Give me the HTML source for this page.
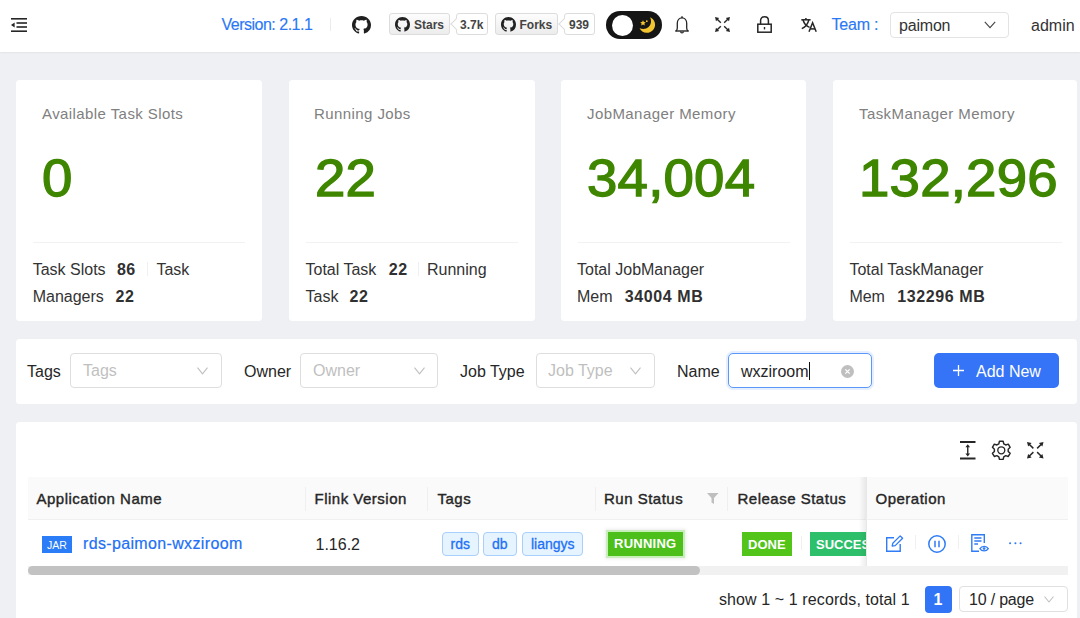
<!DOCTYPE html>
<html><head><meta charset="utf-8">
<style>
*{box-sizing:border-box;margin:0;padding:0}
html,body{width:1080px;height:618px;overflow:hidden;background:#eff0f4;font-family:"Liberation Sans",sans-serif;color:#262626}
.a{position:absolute}
.t{position:absolute;white-space:nowrap;line-height:1}
svg{position:absolute;overflow:visible}
#hdr{position:absolute;left:0;top:0;width:1080px;height:52px;background:#fff;box-shadow:0 1px 1.5px rgba(0,0,0,0.05)}
.card{position:absolute;background:#fff;border-radius:3.5px}
.gh{position:absolute;top:13px;height:22px;border:1px solid #dcdcdc;border-radius:3px;background:linear-gradient(#fdfdfd,#ececec)}
.cnt{position:absolute;top:13px;height:22px;border:1px solid #dcdcdc;border-radius:3px;background:#fff}
.ght{position:absolute;top:5px;font-weight:700;font-size:12px;line-height:1;color:#444;white-space:nowrap}
.arr{position:absolute;left:-5px;top:6px;width:8px;height:8px;background:#fff;border-left:1px solid #dcdcdc;border-bottom:1px solid #dcdcdc;transform:rotate(45deg)}
.sel{position:absolute;border:1px solid #dedede;border-radius:4px;background:#fff}
.tt{top:106px;font-size:15px;color:#808080;letter-spacing:0.42px}
.vv{top:152px;font-size:52px;color:#3f8600;letter-spacing:0.2px;transform:scaleX(1.05);transform-origin:0 0;-webkit-text-stroke:1.3px #3f8600}
.ff{font-size:16px;color:#333}
.b{font-weight:700;color:#303030;letter-spacing:0.6px;margin-left:0.7px}
.lbl{font-size:16px;color:#262626;top:364px}
.ph{font-size:16px;color:#bfbfbf;top:363px}
.th{font-size:15px;font-weight:400;color:#262626;top:491px;-webkit-text-stroke:0.4px #262626;letter-spacing:0.5px}
.blue{color:#2170f5;-webkit-text-stroke:0.2px #2170f5}
.tag{position:absolute;top:531.5px;height:24px;border:1px solid #a9cffb;border-radius:4px;background:#e6f4ff}
.tagt{position:absolute;top:4px;font-size:14px;line-height:1;color:#2170f5;-webkit-text-stroke:0.3px #2170f5;white-space:nowrap}
.st{position:absolute;height:24px;color:#fff;font-weight:700;font-size:13px;line-height:1}
.st span{position:absolute;top:5.5px;white-space:nowrap}
.hsep{position:absolute;top:487px;width:1px;height:24px;background:#efefef}
.osep{position:absolute;top:535px;width:1px;height:14px;background:#f0f0f0}
</style></head><body>
<svg width="0" height="0" style="position:absolute"><defs>
<path id="ghm" d="M8 0C3.58 0 0 3.58 0 8c0 3.54 2.29 6.53 5.47 7.590.4.07.55-.17.55-.38 0-.19-.01-.82-.01-1.49-2.01.37-2.53-.49-2.69-.94-.09-.23-.48-.94-.82-1.13-.28-.15-.68-.52-.01-.53.63-.01 1.08.58 1.23.82.72 1.21 1.87.87 2.330.66.07-.52.28-.87.51-1.07-1.78-.2-3.64-.89-3.64-3.95 0-.87.31-1.59.82-2.15-.08-.2-.36-1.02.08-2.12 0 0 .67-.21 2.2.82.64-.18 1.32-.27 2-.27.68 0 1.36.09 2 .27 1.53-1.04 2.2-.82 2.2-.82.44 1.1.16 1.92.08 2.12.51.56.82 1.27.82 2.15 0 3.07-1.87 3.75-3.65 3.95.29.25.54.73.54 1.48 0 1.07-.01 1.93-.01 2.2 0 .21.15.46.55.38A8.013 8.013 0 0016 8c0-4.42-3.58-8-8-8z"/>
</defs></svg>
<div id="hdr">
  <!-- menu fold icon -->
  <svg style="left:11px;top:18px" width="16" height="14" viewBox="0 0 16 14">
    <rect x="0" y="0" width="16" height="1.6" fill="#262626"/>
    <rect x="5.5" y="4.2" width="10.5" height="1.6" fill="#262626"/>
    <rect x="5.5" y="8.2" width="10.5" height="1.6" fill="#262626"/>
    <rect x="0" y="12.4" width="16" height="1.6" fill="#262626"/>
    <path d="M0 7 L3.6 4.4 L3.6 9.6Z" fill="#262626"/>
  </svg>
  <div class="t" style="left:221.5px;top:16.7px;font-size:16px;color:#2a78f6;-webkit-text-stroke:0.15px #2a78f6;letter-spacing:-0.5px">Version: 2.1.1</div>
  <div class="a" style="left:330px;top:18px;width:1px;height:13px;background:#ececec"></div>
  <svg style="left:352px;top:16px" width="19" height="18" viewBox="0 0 16 16" preserveAspectRatio="none"><use href="#ghm" fill="#1f1f1f"/></svg>

  <div class="gh" style="left:389px;width:61px">
    <svg style="left:5px;top:3px" width="15" height="15" viewBox="0 0 16 16"><use href="#ghm" fill="#222"/></svg>
    <div class="ght" style="left:24px">Stars</div>
  </div>
  <div class="cnt" style="left:456px;width:32px"><div class="arr"></div><div class="ght" style="left:3px">3.7k</div></div>
  <div class="gh" style="left:495px;width:63px">
    <svg style="left:5px;top:3px" width="15" height="15" viewBox="0 0 16 16"><use href="#ghm" fill="#222"/></svg>
    <div class="ght" style="left:23.5px">Forks</div>
  </div>
  <div class="cnt" style="left:564px;width:31px"><div class="arr"></div><div class="ght" style="left:4px">939</div></div>

  <!-- dark toggle -->
  <div class="a" style="left:606px;top:11px;width:56px;height:28px;border-radius:14px;background:#151515"></div>
  <div class="a" style="left:612px;top:14.5px;width:21px;height:21px;border-radius:50%;background:#fff"></div>
  <svg style="left:639px;top:17px" width="17" height="16" viewBox="0 0 17 16">
    <path d="M11 0.3 C14.8 1.8 16.4 5.2 16 8.8 C15.4 13 11.8 16 7.6 15.8 C4.4 15.6 1.8 13.8 0.6 11.2 C3.6 12.4 7.2 12.2 9.6 10 C12.2 7.6 12.8 3.6 11 0.3Z" fill="#f4c430"/>
    <path d="M4 3.2 L4.9 5 L6.8 5.2 L5.4 6.5 L5.8 8.4 L4 7.4 L2.2 8.4 L2.6 6.5 L1.2 5.2 L3.1 5Z" fill="#f4c430"/>
    <circle cx="7.8" cy="4.2" r="0.9" fill="#f4c430"/>
  </svg>
  <!-- bell -->
  <svg style="left:675px;top:16px" width="14" height="18" viewBox="0 0 14 18">
    <path d="M1 15 C1.9 14.3 2.3 13.3 2.3 12 V7.3 C2.3 4.3 4.3 1.9 7 1.9 C9.7 1.9 11.7 4.3 11.7 7.3 V12 C11.7 13.3 12.1 14.3 13 15" fill="none" stroke="#262626" stroke-width="1.3"/>
    <path d="M0.2 15 H13.8" stroke="#262626" stroke-width="1.4"/>
    <path d="M7 0.2 V2" stroke="#262626" stroke-width="1.4"/>
    <path d="M5.6 15.6 A1.4 1.4 0 0 0 8.4 15.6" fill="none" stroke="#262626" stroke-width="1.2"/>
  </svg>
  <!-- fullscreen -->
  <svg style="left:715px;top:17px" width="15" height="15" viewBox="0 0 15 15">
    <g stroke="#262626" stroke-width="1.4" fill="none"><path d="M1.5 1.5 L5.8 5.8"/><path d="M13.5 1.5 L9.2 5.8"/><path d="M1.5 13.5 L5.8 9.2"/><path d="M13.5 13.5 L9.2 9.2"/></g>
    <g fill="#262626"><path d="M0 0 L4.2 1 L1 4.2Z"/><path d="M15 0 L14 4.2 L10.8 1Z"/><path d="M0 15 L1 10.8 L4.2 14Z"/><path d="M15 15 L10.8 14 L14 10.8Z"/></g>
  </svg>
  <!-- lock -->
  <svg style="left:757px;top:16px" width="15" height="17" viewBox="0 0 15 17">
    <path d="M3.6 8.2 V4.5 C3.6 2.2 5.2 0.8 7.5 0.8 C9.8 0.8 11.4 2.2 11.4 4.5 V8.2" fill="none" stroke="#262626" stroke-width="1.5"/>
    <rect x="0.8" y="8.2" width="13.4" height="8" fill="none" stroke="#262626" stroke-width="1.5"/>
    <rect x="6.8" y="11" width="1.4" height="2.4" fill="#262626"/>
  </svg>
  <!-- translate -->
  <svg style="left:801px;top:18px" width="16" height="14" viewBox="0 0 16 14">
    <g stroke="#262626" stroke-width="1.5" fill="none">
      <path d="M0.3 1.8 H9.6"/><path d="M4.9 0 V1.8"/>
      <path d="M2 1.8 C3 5.6 5.4 8.2 8.6 9.4"/><path d="M7.8 1.8 C7 5.6 4.2 9 0.8 10.6"/>
      <path d="M8 13.8 L11.6 4.8 L15.2 13.8"/><path d="M9.2 10.9 H14"/>
    </g>
  </svg>
  <div class="t" style="left:831.5px;top:16.7px;font-size:16px;color:#2a78f6;-webkit-text-stroke:0.15px #2a78f6;letter-spacing:-0.2px">Team :</div>
  <div class="sel" style="left:889.5px;top:11.5px;width:119px;height:26px;border-color:#e3e3e3"></div>
  <div class="t" style="left:899px;top:18px;font-size:16px;color:#333;letter-spacing:-0.2px">paimon</div>
  <svg style="left:984px;top:21px" width="12" height="8" viewBox="0 0 12 8"><path d="M0.8 0.8 L6 6.6 L11.2 0.8" fill="none" stroke="#444" stroke-width="1.1"/></svg>
  <div class="t" style="left:1031px;top:17.7px;font-size:16px;color:#333">admin</div>
</div>
<!--CARDS-->
<div class="card" style="left:16px;top:80px;width:246px;height:241px"></div>
<div class="t tt" style="left:42px">Available Task Slots</div>
<div class="t vv" style="left:42px">0</div>
<div class="a" style="left:33px;top:242px;width:212px;height:1px;background:#f2f2f2"></div>
<div class="card" style="left:289px;top:80px;width:246px;height:241px"></div>
<div class="t tt" style="left:314px">Running Jobs</div>
<div class="t vv" style="left:315px">22</div>
<div class="a" style="left:306px;top:242px;width:212px;height:1px;background:#f2f2f2"></div>
<div class="card" style="left:561px;top:80px;width:245px;height:241px"></div>
<div class="t tt" style="left:587px">JobManager Memory</div>
<div class="t vv" style="left:587px">34,004</div>
<div class="a" style="left:578px;top:242px;width:212px;height:1px;background:#f2f2f2"></div>
<div class="card" style="left:833px;top:80px;width:244px;height:241px"></div>
<div class="t tt" style="left:859px">TaskManager Memory</div>
<div class="t vv" style="left:859px">132,296</div>
<div class="a" style="left:850px;top:242px;width:212px;height:1px;background:#f2f2f2"></div>
<div class="t ff" style="left:32.7px;top:262px">Task Slots</div>
<div class="t ff b" style="left:116.2px;top:262px">86</div>
<div class="t ff" style="left:156.4px;top:262px">Task</div>
<div class="t ff" style="left:32.7px;top:289px">Managers</div>
<div class="t ff b" style="left:114.9px;top:289px">22</div>
<div class="t ff" style="left:305.5px;top:262px">Total Task</div>
<div class="t ff b" style="left:388.0px;top:262px">22</div>
<div class="t ff" style="left:427.0px;top:262px">Running</div>
<div class="t ff" style="left:305.5px;top:289px">Task</div>
<div class="t ff b" style="left:348.8px;top:289px">22</div>
<div class="t ff" style="left:577.0px;top:262px">Total JobManager</div>
<div class="t ff" style="left:577.0px;top:289px">Mem</div>
<div class="t ff b" style="left:624.0px;top:289px">34004 MB</div>
<div class="t ff" style="left:849.4px;top:262px">Total TaskManager</div>
<div class="t ff" style="left:849.4px;top:289px">Mem</div>
<div class="t ff b" style="left:896.6px;top:289px">132296 MB</div>
<div class="a" style="left:147px;top:262px;width:1px;height:14px;background:#f0f0f0"></div>
<div class="a" style="left:417.5px;top:262px;width:1px;height:14px;background:#f0f0f0"></div>
<!--/CARDS-->
<!--FILTER-->
<div class="card" style="left:16px;top:339px;width:1061px;height:65px"></div>
<div class="t lbl" style="left:27px">Tags</div>
<div class="sel" style="left:70px;top:352.5px;width:152px;height:35.5px"></div>
<div class="t ph" style="left:83px">Tags</div>
<svg style="left:197px;top:367px" width="11" height="8" viewBox="0 0 11 8"><path d="M0.5 0.6 L5.5 6.8 L10.5 0.6" fill="none" stroke="#bfbfbf" stroke-width="1.1"/></svg>
<div class="t lbl" style="left:244px">Owner</div>
<div class="sel" style="left:300px;top:352.5px;width:137.5px;height:35.5px"></div>
<div class="t ph" style="left:313px">Owner</div>
<svg style="left:414px;top:367px" width="11" height="8" viewBox="0 0 11 8"><path d="M0.5 0.6 L5.5 6.8 L10.5 0.6" fill="none" stroke="#bfbfbf" stroke-width="1.1"/></svg>
<div class="t lbl" style="left:460px">Job Type</div>
<div class="sel" style="left:535.5px;top:352.5px;width:119.5px;height:35.5px"></div>
<div class="t ph" style="left:548px">Job Type</div>
<svg style="left:630px;top:367px" width="11" height="8" viewBox="0 0 11 8"><path d="M0.5 0.6 L5.5 6.8 L10.5 0.6" fill="none" stroke="#bfbfbf" stroke-width="1.1"/></svg>
<div class="t lbl" style="left:677px">Name</div>
<div class="a" style="left:728px;top:353px;width:144px;height:35px;border:1px solid #5b97f8;border-radius:5px;background:#fff;box-shadow:0 0 0 2px rgba(45,125,246,0.12)"></div>
<div class="t lbl" style="left:741px">wxziroom</div>
<div class="a" style="left:809px;top:362px;width:1.2px;height:18px;background:#111"></div>
<svg style="left:840.5px;top:364.5px" width="13" height="13" viewBox="0 0 13 13"><circle cx="6.5" cy="6.5" r="6.5" fill="#bfbfbf"/><path d="M4.3 4.3 L8.7 8.7 M8.7 4.3 L4.3 8.7" stroke="#fff" stroke-width="1.2"/></svg>
<div class="a" style="left:934px;top:353px;width:125px;height:35px;border-radius:5px;background:#3574f6"></div>
<svg style="left:953px;top:365px" width="11" height="11" viewBox="0 0 11 11"><path d="M5.5 0 V11 M0 5.5 H11" stroke="#fff" stroke-width="1.3"/></svg>
<div class="t" style="left:976px;top:364px;font-size:16px;color:#fff">Add New</div>
<!--/FILTER-->
<!--TABLE-->
<div class="card" style="left:16px;top:422px;width:1061px;height:220px"></div>
<!-- toolbar icons -->
<svg style="left:959.5px;top:440.5px" width="16" height="19" viewBox="0 0 16 19">
  <path d="M0 1 H15.5 M0 17.5 H15.5" stroke="#262626" stroke-width="1.9"/>
  <path d="M7.75 5 V14" stroke="#262626" stroke-width="1.4"/>
  <path d="M7.75 3.2 L5.4 6.2 H10.1Z M7.75 15.4 L5.4 12.4 H10.1Z" fill="#262626"/>
</svg>
<svg style="left:990.8px;top:439.5px" width="20.6" height="20.6" viewBox="0 0 20 20">
  <path d="M8.2 1.2 H11.8 L12.4 3.7 L14.3 4.8 L16.8 4 L18.6 7.1 L16.7 8.9 V11.1 L18.6 12.9 L16.8 16 L14.3 15.2 L12.4 16.3 L11.8 18.8 H8.2 L7.6 16.3 L5.7 15.2 L3.2 16 L1.4 12.9 L3.3 11.1 V8.9 L1.4 7.1 L3.2 4 L5.7 4.8 L7.6 3.7Z" fill="none" stroke="#262626" stroke-width="1.4" stroke-linejoin="round"/>
  <circle cx="10" cy="10" r="3.4" fill="none" stroke="#262626" stroke-width="1.3"/>
</svg>
<svg style="left:1027px;top:441.5px" width="16.5" height="16.5" viewBox="0 0 15 15">
  <g stroke="#262626" stroke-width="1.3" fill="none"><path d="M1.5 1.5 L5.8 5.8"/><path d="M13.5 1.5 L9.2 5.8"/><path d="M1.5 13.5 L5.8 9.2"/><path d="M13.5 13.5 L9.2 9.2"/></g>
  <g fill="#262626"><path d="M0 0 L4.2 1 L1 4.2Z"/><path d="M15 0 L14 4.2 L10.8 1Z"/><path d="M0 15 L1 10.8 L4.2 14Z"/><path d="M15 15 L10.8 14 L14 10.8Z"/></g>
</svg>
<!-- header -->
<div class="a" style="left:28px;top:477px;width:1039.5px;height:42.5px;background:#fafafa;border-bottom:1px solid #f0f0f0"></div>
<div class="hsep" style="left:304.5px"></div>
<div class="hsep" style="left:427px"></div>
<div class="hsep" style="left:594.5px"></div>
<div class="hsep" style="left:727px"></div>
<div class="t th" style="left:36.5px">Application Name</div>
<div class="t th" style="left:314.5px">Flink Version</div>
<div class="t th" style="left:437.5px">Tags</div>
<div class="t th" style="left:604px">Run Status</div>
<svg style="left:707px;top:493px" width="11.5" height="11" viewBox="0 0 11.5 11"><path d="M0 0 H11.5 L7 5 V11 L4.5 9.6 V5Z" fill="#bfbfbf"/></svg>
<div class="t th" style="left:737.5px">Release Status</div>
<!-- row -->
<div class="a" style="left:42px;top:536px;width:30px;height:17px;background:#2a7df6"></div>
<div class="t" style="left:47px;top:539.5px;font-size:10.5px;color:#fff">JAR</div>
<div class="t blue" style="left:83px;top:535.5px;font-size:16px;letter-spacing:0.35px">rds-paimon-wxziroom</div>
<div class="t" style="left:315.5px;top:537px;font-size:16px;color:#262626">1.16.2</div>
<div class="tag" style="left:441.5px;width:37.5px"><div class="tagt" style="left:8px">rds</div></div>
<div class="tag" style="left:483px;width:34px"><div class="tagt" style="left:8px">db</div></div>
<div class="tag" style="left:521.5px;width:61.5px"><div class="tagt" style="left:8.5px">liangys</div></div>
<div class="st" style="left:608px;top:531.5px;width:75px;background:#4cbf1a;box-shadow:0 0 0 2px #c8eebb,0 0 3px 3px rgba(0,0,0,0.08)"><span style="left:6px;letter-spacing:0.25px">RUNNING</span></div>
<div class="st" style="left:741.5px;top:532px;width:50px;height:23.5px;background:#52c41a"><span style="left:6.5px">DONE</span></div>
<div class="osep" style="left:800.5px;top:536px;height:14px"></div>
<div class="st" style="left:810px;top:532px;width:70px;height:23.5px;background:#2ebf6b"><span style="left:6px">SUCCESS</span></div>
<!-- scrollbar -->
<div class="a" style="left:28px;top:566px;width:1039.5px;height:9px;background:#f1f1f1"></div>
<div class="a" style="left:28px;top:566px;width:672px;height:9px;background:#c2c2c2;border-radius:4.5px"></div>
<!-- fixed operation column -->
<div class="a" style="left:859px;top:477px;width:7px;height:89px;background:linear-gradient(to right,rgba(0,0,0,0),rgba(0,0,0,0.07))"></div>
<div class="a" style="left:866px;top:477px;width:201.5px;height:42.5px;background:#fafafa;border-bottom:1px solid #f0f0f0;border-left:1px solid #e8e8e8"></div>
<div class="a" style="left:866px;top:520px;width:201.5px;height:46px;background:#fff;border-left:1px solid #e8e8e8"></div>
<div class="a" style="left:866px;top:566px;width:201.5px;height:9px;background:#f1f1f1"></div>
<div class="t th" style="left:875.5px">Operation</div>
<svg style="left:886px;top:534.5px" width="18" height="17" viewBox="0 0 18 17">
  <path d="M8 2.8 H0.7 V16.3 H14.2 V9" fill="none" stroke="#2f7cf6" stroke-width="1.4"/>
  <path d="M6.2 11 L6.8 8.2 L14.2 0.9 L16.6 3.3 L9.2 10.6Z" fill="none" stroke="#2f7cf6" stroke-width="1.3" stroke-linejoin="round"/>
</svg>
<div class="osep" style="left:915px"></div>
<svg style="left:927.5px;top:534.5px" width="18" height="18" viewBox="0 0 18 18">
  <circle cx="9" cy="9" r="8.2" fill="none" stroke="#2f7cf6" stroke-width="1.5"/>
  <path d="M7 5.8 V12.2 M11 5.8 V12.2" stroke="#2f7cf6" stroke-width="1.5"/>
</svg>
<div class="osep" style="left:958px"></div>
<svg style="left:970.5px;top:534px" width="19" height="18" viewBox="0 0 19 18">
  <path d="M8 17.2 H0.8 V0.8 H13.3 V9" fill="none" stroke="#2f7cf6" stroke-width="1.4"/>
  <path d="M3.3 4 H10.5 M3.3 7 H10.5 M3.3 10 H7" stroke="#2f7cf6" stroke-width="1.3"/>
  <path d="M8.9 14.6 C9.9 13 11.3 12.3 13.1 12.3 C14.9 12.3 16.3 13 17.3 14.6 C16.3 16.2 14.9 16.9 13.1 16.9 C11.3 16.9 9.9 16.2 8.9 14.6Z" fill="#fff" stroke="#2f7cf6" stroke-width="1.3"/>
  <circle cx="13.1" cy="14.6" r="1.3" fill="#2f7cf6"/>
</svg>
<svg style="left:1008.8px;top:541.8px" width="13" height="3" viewBox="0 0 13 3"><circle cx="1.1" cy="1.3" r="1.05" fill="#2f7cf6"/><circle cx="6.4" cy="1.3" r="1.05" fill="#2f7cf6"/><circle cx="11.6" cy="1.3" r="1.05" fill="#2f7cf6"/></svg>
<!-- pagination -->
<div class="t" style="left:719px;top:592px;font-size:16px;color:#262626;letter-spacing:0.1px">show 1 ~ 1 records, total 1</div>
<div class="a" style="left:925px;top:586px;width:27px;height:26.5px;background:#3174f6;border-radius:4px"></div>
<div class="t" style="left:933.5px;top:592px;font-size:16px;font-weight:700;color:#fff">1</div>
<div class="sel" style="left:958.5px;top:586px;width:109px;height:26px;border-color:#e0e0e0"></div>
<div class="t" style="left:969px;top:592px;font-size:16px;color:#262626;letter-spacing:-0.2px">10 / page</div>
<svg style="left:1044px;top:596px" width="10" height="7" viewBox="0 0 10 7"><path d="M0.5 0.5 L5 6 L9.5 0.5" fill="none" stroke="#bfbfbf" stroke-width="1.1"/></svg>
<!--/TABLE-->
</body></html>
